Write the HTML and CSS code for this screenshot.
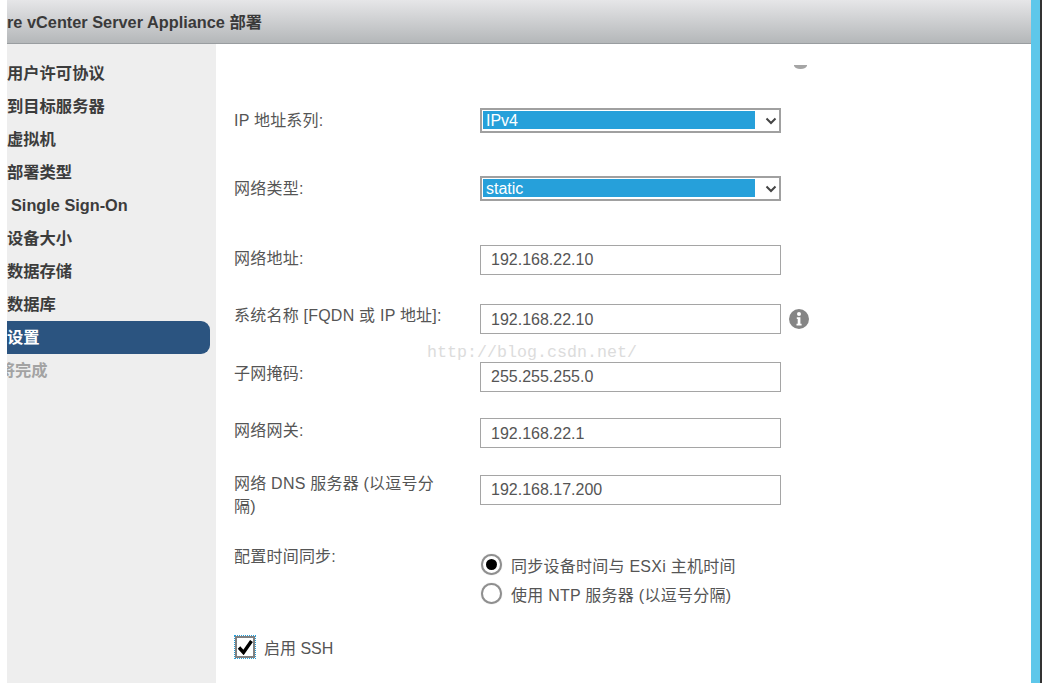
FILE: index.html
```html
<!DOCTYPE html>
<html lang="zh-CN">
<head>
<meta charset="utf-8">
<title>vCenter Server Appliance 部署</title>
<link rel="stylesheet" href="styles.css">
</head>
<body>
<div class="screen">
  <div class="window">
    <header class="titlebar">re vCenter Server Appliance 部署</header>
    <div class="body">
      <nav class="sidebar">
        <div class="step">用户许可协议</div>
        <div class="step">到目标服务器</div>
        <div class="step">虚拟机</div>
        <div class="step">部署类型</div>
        <div class="step step-latin">Single Sign-On</div>
        <div class="step">设备大小</div>
        <div class="step">数据存储</div>
        <div class="step">数据库</div>
        <div class="step step-active">设置</div>
        <div class="step step-muted"><span class="clip-lead">将</span>完成</div>
      </nav>
      <main class="content">
        <span class="spinner"></span>
        <div class="form">
          <div class="label label-down1">IP 地址系列:</div>
          <div class="select"><span class="select-value">IPv4</span>
            <svg class="chevron" viewBox="0 0 12 8"><path d="M1.500 1.500 6 6l4.500-4.500" fill="none" stroke="#444" stroke-width="2"/></svg></div>
          <div class="aside"></div>

          <div class="label label-down1">网络类型:</div>
          <div class="select"><span class="select-value">static</span>
            <svg class="chevron" viewBox="0 0 12 8"><path d="M1.500 1.500 6 6l4.500-4.500" fill="none" stroke="#444" stroke-width="2"/></svg></div>
          <div class="aside"></div>

          <div class="label label-down2">网络地址:</div>
          <input class="field" type="text" value="192.168.22.10" readonly>
          <div class="aside"></div>

          <div class="label">系统名称 [FQDN 或 IP 地址]:</div>
          <input class="field field-low" type="text" value="192.168.22.10" readonly>
          <div class="aside">
            <svg class="info" viewBox="0 0 20 20"><circle cx="10" cy="10" r="10" fill="#858585"/><circle cx="10" cy="5" r="2" fill="#fff"/><path d="M7.800 8.200h3.600v6.600h1.200v1.700H7.500v-1.700h1.200V9.900H7.800z" fill="#fff"/></svg>
          </div>

          <div class="label">子网掩码:</div>
          <input class="field" type="text" value="255.255.255.0" readonly>
          <div class="aside"></div>

          <div class="label label-down1">网络网关:</div>
          <input class="field field-low" type="text" value="192.168.22.1" readonly>
          <div class="aside"></div>

          <div class="label label-up3">网络 DNS 服务器 (以逗号分隔)</div>
          <input class="field" type="text" value="192.168.17.200" readonly>
          <div class="aside"></div>

          <div class="label">配置时间同步:</div>
          <div class="radios">
            <div class="radio-row"><span class="radio radio-on"></span>同步设备时间与 ESXi 主机时间</div>
            <div class="radio-row"><span class="radio"></span>使用 NTP 服务器 (以逗号分隔)</div>
          </div>
          <div class="aside"></div>

          <div class="check-row">
            <span class="check"><svg viewBox="0 0 16 16"><path d="M2 8.500 6.500 13.500 14.500 2" fill="none" stroke="#000" stroke-width="3.400"/></svg></span>
            启用 SSH
          </div>
        </div>
        <div class="watermark">http://blog.csdn.net/</div>
      </main>
    </div>
  </div>
  <div class="edge-blue"></div>
  <div class="edge-dark"></div>
</div>
</body>
</html>
```
FILE: styles.css
```css
* { box-sizing: border-box; }
html, body { margin: 0; height: 100%; background: #fff; overflow: hidden; }
body {
  font-family: "Liberation Sans", "Noto Sans CJK SC", sans-serif;
  font-size: 16px;
  color: #555;
}
.screen { display: flex; height: 683px; width: 1042px; padding-left: 7px; }
.window { flex: 1; min-width: 0; display: flex; flex-direction: column; }
.edge-blue { width: 9px; background: #5ec7ea; }
.edge-dark { width: 2px; background: #333; }

.titlebar {
  height: 44px;
  flex: none;
  line-height: 44px;
  font-size: 16.32px;
  font-weight: 700;
  color: #3a3a3a;
  white-space: nowrap;
  background: linear-gradient(#e6e6e8, #b4b7b9);
  border-bottom: 1px solid #999da0;
}
.body { flex: 1; display: flex; min-height: 0; }

.sidebar { width: 209px; flex: none; background: #eee; padding-top: 13px; overflow: hidden; }
.step {
  height: 33px;
  line-height: 33px;
  margin-right: 6px;
  font-size: 16.3px;
  font-weight: 700;
  color: #3c3c3c;
  white-space: nowrap;
}
.step-latin { padding-left: 4px; }
.step-active { background: #2b5480; color: #fff; border-radius: 0 9px 9px 0; }
.step-muted { color: #a3a3a3; overflow: hidden; }
.clip-lead { display: inline-block; width: 8px; overflow: hidden; direction: rtl; vertical-align: bottom; }

.content { flex: 1; position: relative; padding: 64px 0 0 18px; background: #fff; }
.spinner {
  position: absolute;
  left: 578px;
  top: 21px;
  width: 13px;
  height: 4px;
  background: #a5a5a5;
  border-radius: 0 0 7px 7px / 0 0 4px 4px;
}
.form {
  display: grid;
  grid-template-columns: 246px 301px 40px;
  grid-template-rows: 68px 69px 59px 58px 56px 57px 70px 91px;
  align-items: start;
}
.label { line-height: 23px; width: 214px; letter-spacing: .22px; }
.label-down1 { margin-top: 1px; }
.label-down2 { margin-top: 2px; }
.label-up3 { margin-top: -3px; }
.aside { display: flex; padding: 5px 0 0 8px; }
.info { width: 20px; height: 20px; display: block; }

.select {
  height: 25px;
  border: 2px solid #a0a0a0;
  background: #fff;
  padding: 1px 0 0 1px;
  display: flex;
  align-items: flex-start;
}
.select-value {
  width: 272px;
  height: 18px;
  line-height: 20px;
  overflow: hidden;
  background: #26a0da;
  color: #fff;
  padding-left: 3px;
}
.chevron { width: 12px; height: 8px; margin: 6px 0 0 10px; }

.field {
  display: block;
  width: 301px;
  height: 30px;
  border: 1px solid #a5a5a5;
  border-radius: 0;
  padding: 0 10px;
  margin: 0;
  font: inherit;
  color: #555;
  background: #fff;
  outline: none;
}
.field-low { padding-top: 2px; }

.radios { margin-top: 5px; }
.radio-row { height: 29px; display: flex; align-items: center; white-space: nowrap; gap: 9px; margin-left: 1px; letter-spacing: .25px; }
.radio {
  width: 21px;
  height: 21px;
  flex: none;
  border-radius: 50%;
  border: 2px solid #8f8f8f;
  background: #fff;
  box-shadow: 0 0 1px #aaa;
  position: relative;
}
.radio-on::after {
  content: "";
  position: absolute;
  left: 3px;
  top: 3px;
  width: 11px;
  height: 11px;
  border-radius: 50%;
  background: #000;
}

.check-row { grid-column: 1 / -1; display: flex; align-items: center; gap: 9px; height: 22px; margin-left: 1px; white-space: nowrap; }
.check {
  width: 20px;
  height: 22px;
  flex: none;
  border: 2px solid #808080;
  outline: 1px dotted #26a0da;
  background: #fff;
  display: flex;
  align-items: center;
  justify-content: center;
}
.check svg { width: 16px; height: 16px; display: block; }

.watermark {
  position: absolute;
  left: 211px;
  top: 299px;
  font-family: "Liberation Mono", monospace;
  font-size: 16.67px;
  line-height: 20px;
  color: #dcdcdc;
  white-space: nowrap;
  pointer-events: none;
}
```
